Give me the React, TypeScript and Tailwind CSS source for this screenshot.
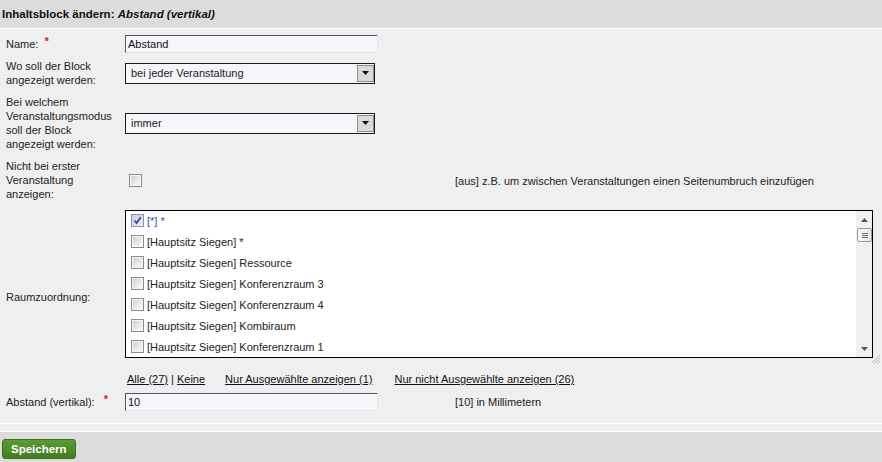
import React from "react";

function Checkbox({ checked = false }: { checked?: boolean }) {
  if (checked) {
    return (
      <div className="relative w-[13px] h-[13px] shrink-0 border border-[#8a93a8] bg-linear-to-br from-[#c9cfdf] to-[#eef0f6]">
        <svg className="absolute left-0 top-0" width="11" height="11" viewBox="0 0 11 11">
          <path d="M2.5 5.5 L4.5 8 L8.8 2.2" fill="none" stroke="#2b4b9a" strokeWidth="1.8" />
        </svg>
      </div>
    );
  }
  return (
    <div className="w-[13px] h-[13px] shrink-0 border border-[#8c8c8c] bg-[#f6f6f6] p-[1px]">
      <div className="w-full h-full bg-linear-to-br from-[#d2d2d2] to-[#fafafa]" />
    </div>
  );
}

function Select({ value }: { value: string }) {
  return (
    <div className="relative w-[250px] h-[21px] border border-[#1c1c1c] bg-[#f6f6fa] flex items-center pl-[5px]">
      <span>{value}</span>
      <div className="absolute right-0 top-[1px] w-[17px] h-[17px] border border-[#8e8e8e] bg-[#dadada] flex items-center justify-center">
        <svg width="7" height="4" viewBox="0 0 7 4">
          <path d="M0 0 L7 0 L3.5 4 Z" fill="#111" />
        </svg>
      </div>
    </div>
  );
}

function TextInput({ value }: { value: string }) {
  return (
    <input
      readOnly
      defaultValue={value}
      className="w-[253px] h-[18px] bg-[#f5f6fa] border border-t-[#55556a] border-l-[#55556a] border-r-[#e2e2e8] border-b-[#e2e2e8] pl-[2px] text-[11px] text-[#111] outline-none font-['Liberation_Sans',Arial,sans-serif]"
    />
  );
}

const Star = ({ ml }: { ml: string }) => (
  <span className={`${ml} relative -top-[3px] text-[#d62020] font-bold`}>*</span>
);

const items: { text: string; checked?: boolean }[] = [
  { text: "[*] *", checked: true },
  { text: "[Hauptsitz Siegen] *" },
  { text: "[Hauptsitz Siegen] Ressource" },
  { text: "[Hauptsitz Siegen] Konferenzraum 3" },
  { text: "[Hauptsitz Siegen] Konferenzraum 4" },
  { text: "[Hauptsitz Siegen] Kombiraum" },
  { text: "[Hauptsitz Siegen] Konferenzraum 1" },
];

export default function App() {
  return (
    <div className="w-[882px] h-[462px] overflow-hidden bg-[#efefef] font-['Liberation_Sans',Arial,sans-serif] text-[11px] leading-[14px] text-[#222]">
      {/* header */}
      <div className="h-[29px] bg-[#dcdcdc] border-b border-white pl-[2px] flex items-center text-[11.5px] font-bold text-[#111]">
        <span>Inhaltsblock ändern:&nbsp;</span>
        <i>Abstand (vertikal)</i>
      </div>

      <div className="border-b border-white">
        {/* Name */}
        <div className="h-[29px] flex items-center">
          <div className="w-[125px] pl-[6px]">
            Name:<Star ml="ml-[6px]" />
          </div>
          <TextInput value="Abstand" />
        </div>

        {/* Wo */}
        <div className="h-[30px] flex items-center">
          <div className="w-[125px] pl-[6px]">
            Wo soll der Block
            <br />
            angezeigt werden:
          </div>
          <Select value="bei jeder Veranstaltung" />
        </div>

        {/* Modus */}
        <div className="h-[70px] flex items-center">
          <div className="w-[125px] pl-[6px]">
            Bei welchem
            <br />
            Veranstaltungsmodus
            <br />
            soll der Block
            <br />
            angezeigt werden:
          </div>
          <Select value="immer" />
        </div>

        {/* Nicht bei erster */}
        <div className="h-[44px] flex items-center">
          <div className="w-[125px] pl-[6px]">
            Nicht bei erster
            <br />
            Veranstaltung
            <br />
            anzeigen:
          </div>
          <div className="w-[330px] pl-[4px] pt-[1px]">
            <Checkbox />
          </div>
          <div className="pt-[1px]">[aus] z.B. um zwischen Veranstaltungen einen Seitenumbruch einzufügen</div>
        </div>

        {/* Raumzuordnung */}
        <div className="h-[190px] flex items-center">
          <div className="w-[125px] pl-[6px]">Raumzuordnung:</div>
          <div className="h-full pt-[8px] flex flex-col">
            <div className="relative w-[748px] h-[148px] border border-black bg-white">
              <div className="h-full overflow-hidden pl-[5px]">
                <div className="-mt-[1px]">
                  {items.map((it, i) => (
                    <div key={i} className="h-[21px] flex items-center gap-[3px]">
                      <Checkbox checked={it.checked} />
                      <span className={it.checked ? "text-[#3253a8]" : "text-[#222]"}>{it.text}</span>
                    </div>
                  ))}
                </div>
              </div>
              {/* scrollbar */}
              <div className="absolute right-0 top-0 bottom-0 w-[16px] bg-[#f0f0f0] flex flex-col items-center">
                <div className="h-[17px] w-full flex items-center justify-center">
                  <svg width="7" height="4" viewBox="0 0 7 4">
                    <path d="M3.5 0 L7 4 L0 4 Z" fill="#555" />
                  </svg>
                </div>
                <div className="ml-[1px] w-[15px] h-[14px] rounded-[2px] border border-[#9c9c9c] bg-linear-to-r from-[#fbfbfb] to-[#e4e4e4] flex flex-col items-center justify-center gap-[1px]">
                  <div className="w-[6px] h-[1px] bg-[#6e6e6e]" />
                  <div className="w-[6px] h-[1px] bg-[#6e6e6e]" />
                  <div className="w-[6px] h-[1px] bg-[#6e6e6e]" />
                </div>
                <div className="flex-1" />
                <div className="h-[17px] w-full flex items-center justify-center">
                  <svg width="7" height="4" viewBox="0 0 7 4">
                    <path d="M0 0 L7 0 L3.5 4 Z" fill="#555" />
                  </svg>
                </div>
              </div>
              {/* resize grip */}
              <svg className="absolute left-[745px] top-[144px]" width="9" height="9" viewBox="0 0 9 9">
                <path d="M8.5 0.5 L0.5 8.5 M8.5 3.5 L3.5 8.5 M8.5 6.5 L6.5 8.5" stroke="#808080" strokeWidth="1" strokeDasharray="1 1" />
              </svg>
            </div>
            <div className="mt-[14px] pl-[2px] flex text-[#111]">
              <span className="underline">Alle (27)</span>
              <span>&nbsp;|&nbsp;</span>
              <span className="underline">Keine</span>
              <span className="underline ml-[20px]">Nur Ausgewählte anzeigen (1)</span>
              <span className="underline ml-[22px]">Nur nicht Ausgewählte anzeigen (26)</span>
            </div>
          </div>
        </div>

        {/* Abstand */}
        <div className="h-[20px] flex items-center">
          <div className="w-[125px] pl-[6px]">
            Abstand (vertikal):<Star ml="ml-[9px]" />
          </div>
          <div className="w-[330px]">
            <TextInput value="10" />
          </div>
          <div>[10] in Millimetern</div>
        </div>
        <div className="h-[11px]" />
      </div>

      <div className="h-[7px]" />

      {/* footer */}
      <div className="border-t border-white bg-[#dcdcdc] h-[31px] pt-[7px] pl-[2px]">
        <button className="h-[20px] px-[8px] rounded-[3px] border border-[#3c6d1d] bg-linear-to-b from-[#5c9b35] to-[#437c22] text-white font-bold text-[11.5px] leading-[14px] font-['Liberation_Sans',Arial,sans-serif]">
          Speichern
        </button>
      </div>
    </div>
  );
}
